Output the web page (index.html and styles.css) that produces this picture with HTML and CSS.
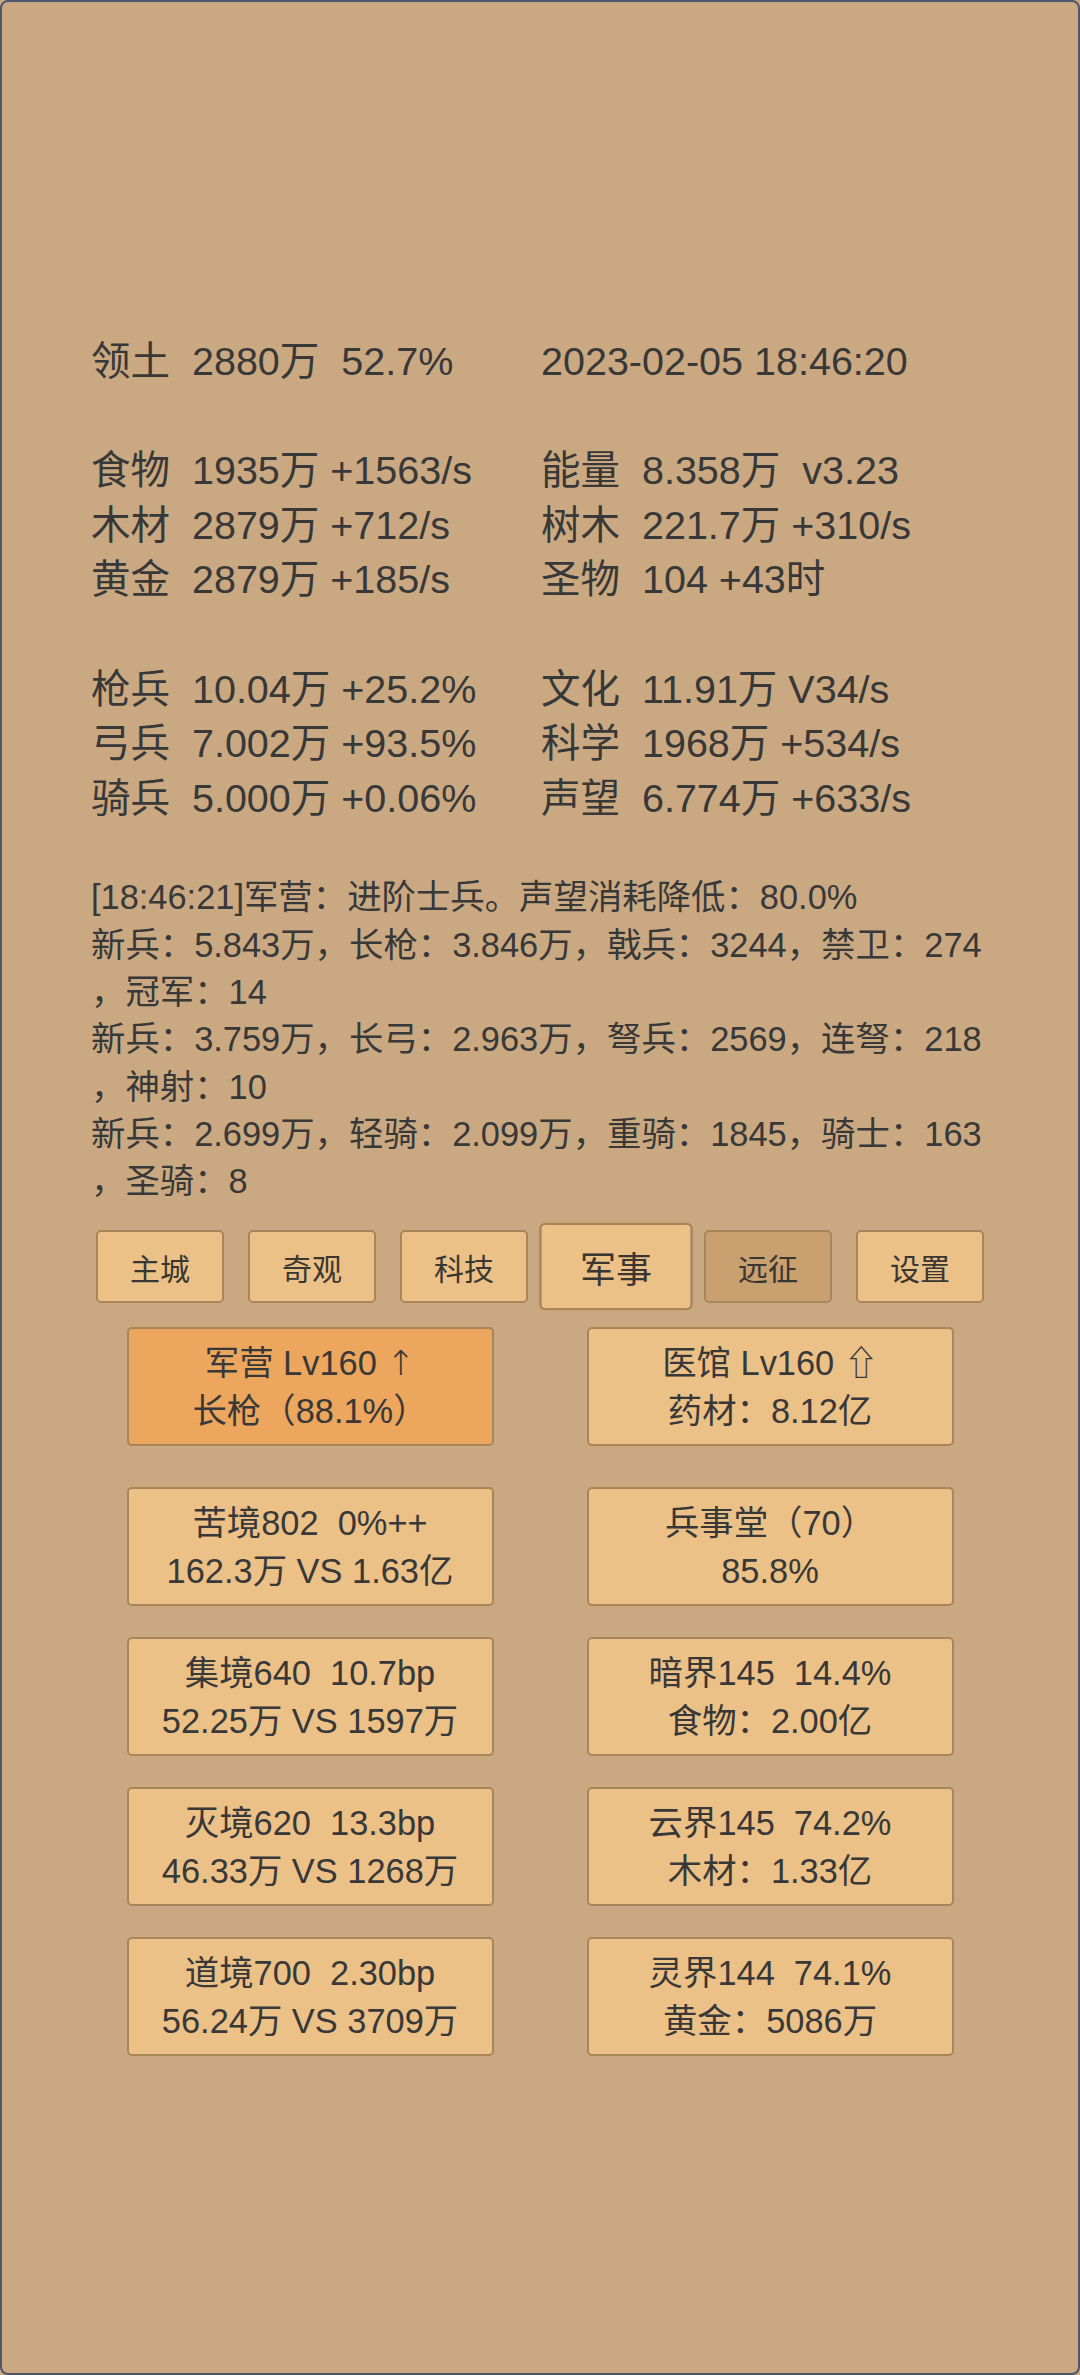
FILE: index.html
```html
<!DOCTYPE html>
<html lang="zh-CN">
<head>
<meta charset="utf-8">
<title>game</title>
<link rel="stylesheet" href="styles.css">
</head>
<body>
<div class="app">
  <section class="stats">
    <div class="col col-left">
      <div class="line">领土  2880万  52.7%</div>
      <div class="line"></div>
      <div class="line">食物  1935万 +1563/s</div>
      <div class="line">木材  2879万 +712/s</div>
      <div class="line">黄金  2879万 +185/s</div>
      <div class="line"></div>
      <div class="line">枪兵  10.04万 +25.2%</div>
      <div class="line">弓兵  7.002万 +93.5%</div>
      <div class="line">骑兵  5.000万 +0.06%</div>
    </div>
    <div class="col col-right">
      <div class="line">2023-02-05 18:46:20</div>
      <div class="line"></div>
      <div class="line">能量  8.358万  v3.23</div>
      <div class="line">树木  221.7万 +310/s</div>
      <div class="line">圣物  104 +43时</div>
      <div class="line"></div>
      <div class="line">文化  11.91万 V34/s</div>
      <div class="line">科学  1968万 +534/s</div>
      <div class="line">声望  6.774万 +633/s</div>
    </div>
  </section>

  <section class="log">
    <div class="log-line">[18:46:21]军营：进阶士兵。声望消耗降低：80.0%</div>
    <div class="log-line">新兵：5.843万，长枪：3.846万，戟兵：3244，禁卫：274</div>
    <div class="log-line">，冠军：14</div>
    <div class="log-line">新兵：3.759万，长弓：2.963万，弩兵：2569，连弩：218</div>
    <div class="log-line">，神射：10</div>
    <div class="log-line">新兵：2.699万，轻骑：2.099万，重骑：1845，骑士：163</div>
    <div class="log-line">，圣骑：8</div>
  </section>

  <nav class="tabs">
    <div class="slot"><div class="tab">主城</div></div>
    <div class="slot"><div class="tab">奇观</div></div>
    <div class="slot"><div class="tab">科技</div></div>
    <div class="slot"><div class="tab tab-active">军事</div></div>
    <div class="slot"><div class="tab tab-dark">远征</div></div>
    <div class="slot"><div class="tab">设置</div></div>
  </nav>

  <section class="cards">
    <div class="card card-hot"><div>军营 Lv160 <span class="arrow">↑</span></div><div>长枪（88.1%）</div></div>
    <div class="card"><div>医馆 Lv160 <span class="arrow">⇧</span></div><div>药材：8.12亿</div></div>
    <div class="card card-gap"><div>苦境802  0%++</div><div>162.3万 VS 1.63亿</div></div>
    <div class="card card-gap"><div>兵事堂（70）</div><div>85.8%</div></div>
    <div class="card"><div>集境640  10.7bp</div><div>52.25万 VS 1597万</div></div>
    <div class="card"><div>暗界145  14.4%</div><div>食物：2.00亿</div></div>
    <div class="card"><div>灭境620  13.3bp</div><div>46.33万 VS 1268万</div></div>
    <div class="card"><div>云界145  74.2%</div><div>木材：1.33亿</div></div>
    <div class="card"><div>道境700  2.30bp</div><div>56.24万 VS 3709万</div></div>
    <div class="card"><div>灵界144  74.1%</div><div>黄金：5086万</div></div>
  </section>
</div>
</body>
</html>
```

FILE: styles.css
```css
html, body {
  margin: 0;
  padding: 0;
  background: #caa982;
}

.app {
  box-sizing: border-box;
  width: 1080px;
  height: 2375px;
  border: 2px solid #4c566a;
  border-radius: 8px;
  background: #caa982;
  color: #383838;
  font-family: "Liberation Sans", "Noto Sans CJK SC", sans-serif;
  padding-top: 332px;
  overflow: hidden;
}

.stats {
  display: flex;
  padding-left: 89px;
  font-size: 39.5px;
  line-height: 54.6px;
}

.col-left {
  width: 450px;
}

.line {
  height: 54.6px;
  white-space: pre;
}

.log {
  margin-top: 49px;
  padding-left: 89px;
  font-size: 34.4px;
  line-height: 47.3px;
}

.log-line {
  height: 47.3px;
  white-space: nowrap;
}

.tabs {
  display: flex;
  margin-top: 25px;
  padding-left: 82px;
}

.slot {
  width: 152px;
  height: 73px;
  display: flex;
  justify-content: center;
}

.tab {
  box-sizing: border-box;
  width: 128px;
  height: 73px;
  border: 2px solid #a9855a;
  border-radius: 5px;
  background: #ecc187;
  display: flex;
  align-items: center;
  justify-content: center;
  font-size: 30px;
  color: #3a3632;
}

.tab-active {
  transform: scale(1.2);
}

.tab-dark {
  background: #c9a070;
}

.cards {
  display: grid;
  grid-template-columns: 367px 367px;
  column-gap: 93px;
  row-gap: 31px;
  justify-content: center;
  margin-top: 24px;
}

.card {
  box-sizing: border-box;
  height: 119px;
  border: 2px solid #a9855a;
  border-radius: 5px;
  background: #ecc187;
  display: flex;
  flex-direction: column;
  justify-content: center;
  align-items: center;
  font-size: 34.4px;
  line-height: 48px;
  white-space: pre;
  color: #383838;
}

.arrow {
  font-family: "DejaVu Sans", sans-serif;
  font-weight: 300;
}

.card-hot {
  background: #eca65e;
}

.card-gap {
  margin-top: 10px;
}
```
